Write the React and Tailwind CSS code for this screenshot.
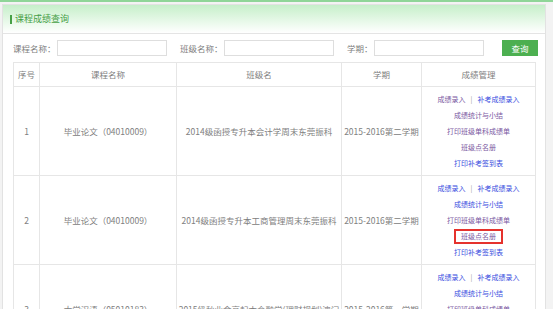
const rows = [
  {
    no: 1,
    course: "毕业论文（04010009）",
    cls: "2014级函授专升本会计学周末东莞振科",
    term: "2015-2016第二学期",
    colors: ["v", "b", "v", "v", "v", "b"],
    marked: false,
  },
  {
    no: 2,
    course: "毕业论文（04010009）",
    cls: "2014级函授专升本工商管理周末东莞振科",
    term: "2015-2016第二学期",
    colors: ["b", "b", "b", "v", "v", "b"],
    marked: true,
  },
  {
    no: 3,
    course: "大学汉语（05010183）",
    cls: "2015级秋业余高起本金融学(理财规划)澳门",
    term: "2015-2016第一学期",
    colors: ["b", "b", "b", "v", "v", "b"],
    marked: false,
  },
];

function LinkText({ kind, children }) {
  return (
    <span className={kind === "v" ? "text-[#7a589f]" : "text-[#3a4ee0]"}>
      {children}
    </span>
  );
}

function Manage({ colors, marked }) {
  return (
    <div className="flex flex-col items-center text-[7px] leading-[16px]">
      <div>
        <LinkText kind={colors[0]}>成绩录入</LinkText>
        <span className="text-[#999] mx-[5px]">|</span>
        <LinkText kind={colors[1]}>补考成绩录入</LinkText>
      </div>
      <LinkText kind={colors[2]}>成绩统计与小结</LinkText>
      <LinkText kind={colors[3]}>打印班级单科成绩单</LinkText>
      <div className="h-[16px] flex items-center">
        {marked ? (
          <span className="inline-block border-2 border-[#e5322d] px-[5px] leading-[11px]">
            <LinkText kind={colors[4]}>班级点名册</LinkText>
          </span>
        ) : (
          <LinkText kind={colors[4]}>班级点名册</LinkText>
        )}
      </div>
      <LinkText kind={colors[5]}>打印补考签到表</LinkText>
    </div>
  );
}

export default function App() {
  return (
    <div
      className="w-[553px] h-[309px] overflow-hidden bg-[#f3f3f3] border-t-2 border-[#8fd598]"
      style={{ fontFamily: '"Noto Sans CJK SC", "Noto Sans", sans-serif' }}
    >
      <div className="ml-[2px] mt-[2px] w-[544px] h-[400px] bg-white border border-[#e2e2e2]">
        <div className="h-[29px] bg-gradient-to-b from-[#c6efca] to-white border-b border-[#e4e4e4] flex items-center pl-[7px]">
          <span className="w-[2px] h-[9px] bg-[#46a046] mr-[3px]"></span>
          <span className="text-[9px] text-[#46a046]">课程成绩查询</span>
        </div>

        <div className="pl-[10px] pt-[6px]">
          <div className="flex items-center h-[16px] text-[8.5px] text-[#808080]">
            <span className="w-[44px]">课程名称：</span>
            <div className="w-[110px] h-[16px] border border-[#dedede]"></div>
            <span className="w-[44px] ml-[13px]">班级名称：</span>
            <div className="w-[110px] h-[16px] border border-[#dedede]"></div>
            <span className="w-[27px] ml-[13px]">学期：</span>
            <div className="w-[110px] h-[16px] border border-[#dedede]"></div>
            <button className="ml-[18px] w-[36px] h-[16px] bg-[#4caf50] text-white text-[8.5px] leading-[16px]">
              查询
            </button>
          </div>

          <table className="mt-[6px] table-fixed border-collapse w-[522px] text-[8.5px] text-[#808080]">
            <colgroup>
              <col className="w-[26px]" />
              <col className="w-[137px]" />
              <col className="w-[165px]" />
              <col className="w-[80px]" />
              <col className="w-[114px]" />
            </colgroup>
            <thead>
              <tr className="h-[24px]">
                <th className="border border-[#e6e6e6] font-normal">序号</th>
                <th className="border border-[#e6e6e6] font-normal">课程名称</th>
                <th className="border border-[#e6e6e6] font-normal">班级名</th>
                <th className="border border-[#e6e6e6] font-normal">学期</th>
                <th className="border border-[#e6e6e6] font-normal">成绩管理</th>
              </tr>
            </thead>
            <tbody>
              {rows.map((row) => (
                <tr key={row.no}>
                  <td className="border border-[#e6e6e6] text-center">{row.no}</td>
                  <td className="border border-[#e6e6e6] text-center">{row.course}</td>
                  <td className="border border-[#e6e6e6] text-center whitespace-nowrap">{row.cls}</td>
                  <td className="border border-[#e6e6e6] text-center whitespace-nowrap">{row.term}</td>
                  <td className="border border-[#e6e6e6] py-[4px]">
                    <Manage colors={row.colors} marked={row.marked} />
                  </td>
                </tr>
              ))}
            </tbody>
          </table>
        </div>
      </div>
    </div>
  );
}
